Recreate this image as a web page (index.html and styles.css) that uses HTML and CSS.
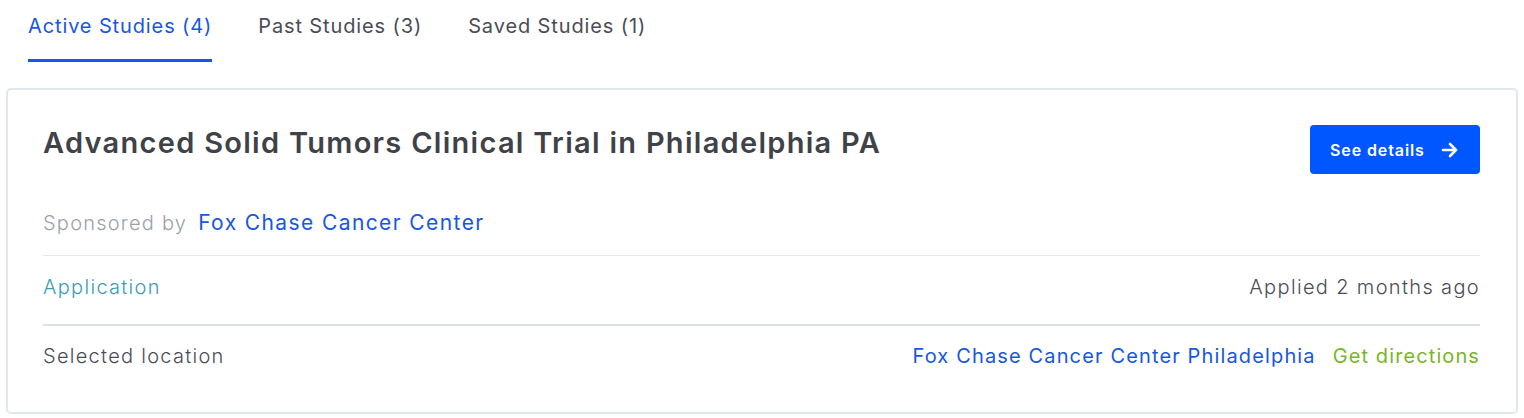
FILE: index.html
```html
<!DOCTYPE html>
<html lang="en">
<head>
<meta charset="utf-8">
<title>Studies</title>
<link rel="stylesheet" href="styles.css">
</head>
<body>
<nav class="tabs">
  <a class="tab tab-active">Active Studies (4)</a>
  <a class="tab">Past Studies (3)</a>
  <a class="tab">Saved Studies (1)</a>
</nav>
<section class="card">
  <div class="card-head">
    <h2 class="title">Advanced Solid Tumors Clinical Trial in Philadelphia PA</h2>
    <button class="btn"><span class="btn-label">See details</span>
      <svg class="btn-icon" viewBox="0 0 18 16" width="18" height="16" aria-hidden="true"><path d="M2 8h13M9 2l6 6-6 6" fill="none" stroke="#fff" stroke-width="2.6" stroke-linecap="round" stroke-linejoin="round"/></svg>
    </button>
  </div>
  <div class="sponsor">
    <span class="muted">Sponsored by</span>
    <a class="link link-sponsor">Fox Chase Cancer Center</a>
  </div>
  <div class="row row-first">
    <span class="teal">Application</span>
    <span class="dark applied">Applied 2 months ago</span>
  </div>
  <div class="row row-last">
    <span class="dark">Selected location</span>
    <span class="loc">
      <a class="link">Fox Chase Cancer Center Philadelphia</a>
      <a class="green">Get directions</a>
    </span>
  </div>
</section>
</body>
</html>
```
FILE: styles.css
```css
* { box-sizing: border-box; }
body {
  margin: 0;
  background: #fff;
  font-family: Inter, "Open Sans", sans-serif;
  color: #4a4d55;
}
.tabs {
  display: flex;
  gap: 46px;
  padding-left: 28px;
  height: 62px;
}
.tab {
  display: block;
  font-size: 20px;
  letter-spacing: 0.88px;
  line-height: 30px;
  padding-top: 11px;
  color: #4a4d55;
  border-bottom: 3px solid transparent;
  white-space: nowrap;
}
.tab-active {
  color: #1856e3;
  border-bottom-color: #1856e3;
}
.card {
  margin: 26px 6px 0 6px;
  border: 2px solid #e1e6ea;
  border-radius: 5px;
  padding: 35px 36px 41px 35px;
}
.card-head {
  display: flex;
  justify-content: space-between;
  align-items: flex-start;
}
.title {
  margin: 0;
  font-size: 29px;
  font-weight: 620;
  letter-spacing: 1.28px;
  line-height: 36px;
  color: #3f4248;
}
.btn {
  flex: none;
  width: 170px;
  height: 49px;
  border: 0;
  border-radius: 4px;
  background: #0057ff;
  color: #fff;
  font-family: inherit;
  font-size: 16px;
  font-weight: 600;
  letter-spacing: 0.9px;
  white-space: nowrap;
  display: flex;
  align-items: center;
  padding: 0 19px 0 20px;
  gap: 16px;
}
.btn-label { white-space: nowrap; }
.btn-icon { display: block; flex: none; }
.sponsor {
  margin-top: 34px;
  padding-bottom: 17px;
  display: flex;
  align-items: baseline;
  gap: 11px;
  font-size: 20px;
  line-height: 30px;
  border-bottom: 1px solid #e6e8ea;
}
.muted {
  color: #9aa1ab;
  font-weight: 300;
  letter-spacing: 1.23px;
}
.link {
  color: #1856e3;
  letter-spacing: 1.14px;
}
.link-sponsor {
  font-size: 21px;
  letter-spacing: 1.4px;
}
.row {
  display: flex;
  justify-content: space-between;
  align-items: center;
  font-size: 20px;
  line-height: 30px;
  font-weight: 300;
}
.row-first {
  padding: 16px 0 22px;
  border-bottom: 2px solid #dde1e4;
}
.row-last {
  padding: 15px 0 0;
}
.teal {
  color: #3a9db2;
  letter-spacing: 1.3px;
}
.dark {
  color: #4a4d55;
  letter-spacing: 1.28px;
}
.applied {
  letter-spacing: 1.35px;
}
.loc {
  display: flex;
  gap: 17px;
  font-weight: 400;
}
.green {
  color: #7ab52a;
  letter-spacing: 1.1px;
}
```
